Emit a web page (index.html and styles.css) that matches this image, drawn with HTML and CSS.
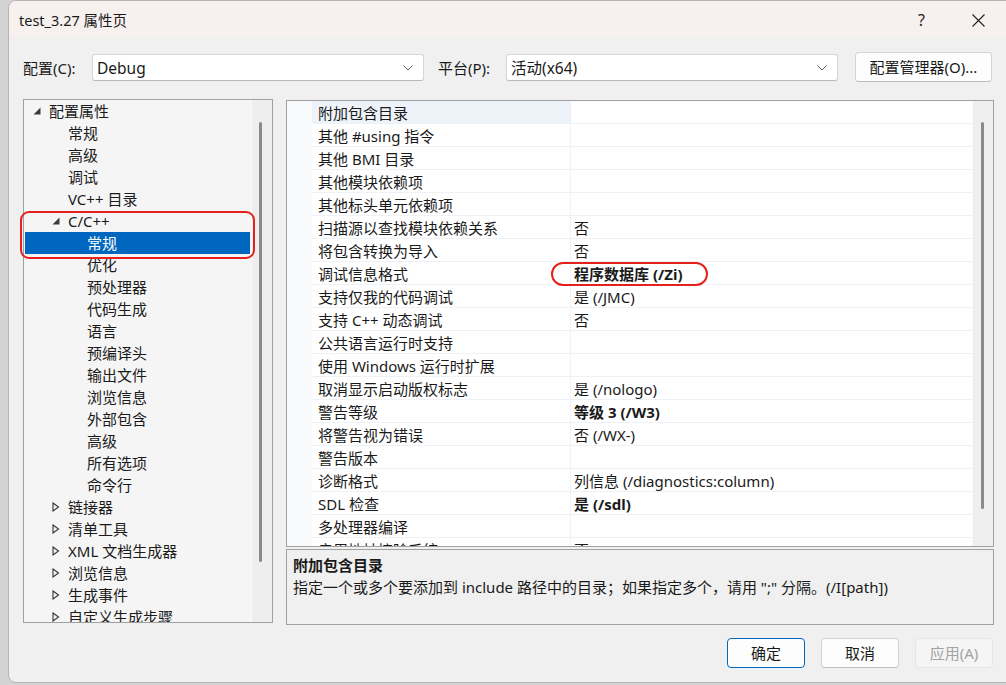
FILE: index.html
```html
<!DOCTYPE html>
<html lang="zh-CN">
<head>
<meta charset="utf-8">
<title>test_3.27 属性页</title>
<link rel="stylesheet" href="styles.css">
</head>
<body>
<div class="window">
  <div class="titlebar">
    <span class="title">test_3.27 属性页</span>
    <span class="help">?</span>
    <span class="close"><svg width="13" height="13" viewBox="0 0 13 13"><path d="M0.5 0.5 L12.5 12.5 M12.5 0.5 L0.5 12.5" stroke="#222" stroke-width="1.1" fill="none"/></svg></span>
  </div>
  <div class="content">
    <div class="config-row">
      <span class="lbl lbl1">配置(C):</span>
      <div class="combo"><span>Debug</span><svg class="chev" width="10" height="6" viewBox="0 0 10 6"><path d="M0.5 0.5 L5 5 L9.5 0.5" stroke="#606060" stroke-width="1" fill="none"/></svg></div>
      <span class="lbl lbl2">平台(P):</span>
      <div class="combo"><span>活动(x64)</span><svg class="chev" width="10" height="6" viewBox="0 0 10 6"><path d="M0.5 0.5 L5 5 L9.5 0.5" stroke="#606060" stroke-width="1" fill="none"/></svg></div>
      <button class="btn cfg-btn">配置管理器(O)...</button>
    </div>
    <div class="main">
      <div class="tree">
        <div class="tree-list">
          <div class="node l0"><span class="twisty"><svg width="8" height="8" viewBox="0 0 8 8"><polygon points="7.5,0.5 7.5,7.5 0.5,7.5" fill="#3c3c3c"/></svg></span>配置属性</div>
          <div class="node l1"><span class="twisty"></span>常规</div>
          <div class="node l1"><span class="twisty"></span>高级</div>
          <div class="node l1"><span class="twisty"></span>调试</div>
          <div class="node l1"><span class="twisty"></span>VC++ 目录</div>
          <div class="node l1"><span class="twisty"><svg width="8" height="8" viewBox="0 0 8 8"><polygon points="7.5,0.5 7.5,7.5 0.5,7.5" fill="#3c3c3c"/></svg></span>C/C++</div>
          <div class="node l2 selected"><span class="twisty"></span>常规</div>
          <div class="node l2"><span class="twisty"></span>优化</div>
          <div class="node l2"><span class="twisty"></span>预处理器</div>
          <div class="node l2"><span class="twisty"></span>代码生成</div>
          <div class="node l2"><span class="twisty"></span>语言</div>
          <div class="node l2"><span class="twisty"></span>预编译头</div>
          <div class="node l2"><span class="twisty"></span>输出文件</div>
          <div class="node l2"><span class="twisty"></span>浏览信息</div>
          <div class="node l2"><span class="twisty"></span>外部包含</div>
          <div class="node l2"><span class="twisty"></span>高级</div>
          <div class="node l2"><span class="twisty"></span>所有选项</div>
          <div class="node l2"><span class="twisty"></span>命令行</div>
          <div class="node l1"><span class="twisty"><svg width="8" height="10" viewBox="0 0 8 10"><polygon points="1,1 6.5,5 1,9" fill="none" stroke="#333" stroke-width="1.1"/></svg></span>链接器</div>
          <div class="node l1"><span class="twisty"><svg width="8" height="10" viewBox="0 0 8 10"><polygon points="1,1 6.5,5 1,9" fill="none" stroke="#333" stroke-width="1.1"/></svg></span>清单工具</div>
          <div class="node l1"><span class="twisty"><svg width="8" height="10" viewBox="0 0 8 10"><polygon points="1,1 6.5,5 1,9" fill="none" stroke="#333" stroke-width="1.1"/></svg></span>XML 文档生成器</div>
          <div class="node l1"><span class="twisty"><svg width="8" height="10" viewBox="0 0 8 10"><polygon points="1,1 6.5,5 1,9" fill="none" stroke="#333" stroke-width="1.1"/></svg></span>浏览信息</div>
          <div class="node l1"><span class="twisty"><svg width="8" height="10" viewBox="0 0 8 10"><polygon points="1,1 6.5,5 1,9" fill="none" stroke="#333" stroke-width="1.1"/></svg></span>生成事件</div>
          <div class="node l1"><span class="twisty"><svg width="8" height="10" viewBox="0 0 8 10"><polygon points="1,1 6.5,5 1,9" fill="none" stroke="#333" stroke-width="1.1"/></svg></span>自定义生成步骤</div>
        </div>
        <div class="vscroll tree-scroll"><div class="thumb tree-thumb"></div></div>
      </div>
      <div class="right">
        <div class="grid">
          <div class="grid-rows">
            <div class="row first"><span class="gut"></span><span class="name">附加包含目录</span><span class="val"></span></div>
            <div class="row"><span class="gut"></span><span class="name">其他 #using 指令</span><span class="val"></span></div>
            <div class="row"><span class="gut"></span><span class="name">其他 BMI 目录</span><span class="val"></span></div>
            <div class="row"><span class="gut"></span><span class="name">其他模块依赖项</span><span class="val"></span></div>
            <div class="row"><span class="gut"></span><span class="name">其他标头单元依赖项</span><span class="val"></span></div>
            <div class="row"><span class="gut"></span><span class="name">扫描源以查找模块依赖关系</span><span class="val">否</span></div>
            <div class="row"><span class="gut"></span><span class="name">将包含转换为导入</span><span class="val">否</span></div>
            <div class="row"><span class="gut"></span><span class="name">调试信息格式</span><span class="val bold">程序数据库 (/Zi)</span></div>
            <div class="row"><span class="gut"></span><span class="name">支持仅我的代码调试</span><span class="val">是 (/JMC)</span></div>
            <div class="row"><span class="gut"></span><span class="name">支持 C++ 动态调试</span><span class="val">否</span></div>
            <div class="row"><span class="gut"></span><span class="name">公共语言运行时支持</span><span class="val"></span></div>
            <div class="row"><span class="gut"></span><span class="name">使用 Windows 运行时扩展</span><span class="val"></span></div>
            <div class="row"><span class="gut"></span><span class="name">取消显示启动版权标志</span><span class="val">是 (/nologo)</span></div>
            <div class="row"><span class="gut"></span><span class="name">警告等级</span><span class="val bold">等级 3 (/W3)</span></div>
            <div class="row"><span class="gut"></span><span class="name">将警告视为错误</span><span class="val">否 (/WX-)</span></div>
            <div class="row"><span class="gut"></span><span class="name">警告版本</span><span class="val"></span></div>
            <div class="row"><span class="gut"></span><span class="name">诊断格式</span><span class="val">列信息 (/diagnostics:column)</span></div>
            <div class="row"><span class="gut"></span><span class="name">SDL 检查</span><span class="val bold">是 (/sdl)</span></div>
            <div class="row"><span class="gut"></span><span class="name">多处理器编译</span><span class="val"></span></div>
            <div class="row"><span class="gut"></span><span class="name">启用地址擦除系统</span><span class="val">否</span></div>
          </div>
          <div class="vscroll grid-scroll"><div class="thumb grid-thumb"></div></div>
        </div>
        <div class="desc">
          <div class="desc-title">附加包含目录</div>
          <div class="desc-text">指定一个或多个要添加到 include 路径中的目录；如果指定多个，请用 ";" 分隔。(/I[path])</div>
        </div>
      </div>
    </div>
    <div class="buttons">
      <button class="btn dlg-btn default">确定</button>
      <button class="btn dlg-btn">取消</button>
      <button class="btn dlg-btn disabled">应用(A)</button>
    </div>
  </div>
</div>
<div class="annot annot-tree"></div>
<div class="annot annot-val"></div>
</body>
</html>
```
FILE: styles.css
```css
* { box-sizing: border-box; }
html, body { margin: 0; padding: 0; }
body {
  width: 1006px;
  height: 685px;
  overflow: hidden;
  background: #d3d3d3;
  font-family: "Noto Sans", "Noto Sans CJK SC", sans-serif;
  font-size: 15px;
  color: #1a1a1a;
}
.window {
  margin-left: 8px;
  width: 1012px;
  height: 683px;
  background: #f0f0f0;
  border: 1px solid #b4b4b4;
  border-radius: 8px;
  overflow: hidden;
}
.titlebar {
  height: 37px;
  background: #f6f1ee;
  display: flex;
  align-items: center;
  padding-left: 10px;
}
.title { font-size: 14.5px; flex: 1; }
.help { font-size: 16px; width: 56px; color: #222; padding-left: 2px; }
.close { width: 47px; display: flex; align-items: center; margin-top: 1px; }
.content { width: 985px; padding-left: 14px; }
.config-row {
  margin-top: 14px;
  height: 30px;
  display: flex;
  align-items: center;
}
.lbl { display: inline-block; }
.lbl1 { width: 69px; }
.lbl2 { margin-left: 14px; width: 68px; }
.combo {
  width: 332px;
  height: 27px;
  background: #fff;
  border: 1px solid #d5d5d5;
  border-bottom-color: #b8b8b8;
  border-radius: 3px;
  display: flex;
  align-items: center;
  justify-content: space-between;
  padding: 1px 10px 0 4px;
  font-size: 15.5px;
}
.chev { margin-top: 1px; }
.btn {
  font-family: "Noto Sans", "Noto Sans CJK SC", sans-serif;
  font-size: 15px;
  color: #1a1a1a;
  background: #fdfdfd;
  border: 1px solid #d3d3d3;
  border-bottom-color: #bdbdbd;
  border-radius: 4px;
  padding: 0;
  line-height: 20px;
}
.cfg-btn { margin-left: 17px; width: 137px; height: 30px; }
.main {
  margin-top: 17px;
  display: flex;
  align-items: flex-start;
  height: 526px;
}
.tree {
  width: 250px;
  height: 524px;
  border: 1px solid #a0a0a0;
  background: #f5f5f5;
  display: flex;
  overflow: hidden;
}
.tree-list { flex: 1; overflow: hidden; }
.node {
  height: 22px;
  line-height: 22px;
  display: flex;
  align-items: center;
  white-space: nowrap;
  margin: 0 1px;
}
.l0 { padding-left: 8px; }
.l1 { padding-left: 27px; }
.l2 { padding-left: 46px; }
.twisty { width: 16px; height: 22px; display: flex; align-items: center; flex: none; }
.node.selected { background: #0067c0; color: #fff; }
.vscroll {
  width: 21px;
  flex: none;
  background: #eeeeee;
  border-left: 1px solid #fafafa;
}
.thumb { width: 3px; background: #8a8a8a; border-radius: 2px; }
.tree-thumb { margin-top: 22px; margin-left: 7px; height: 440px; }
.right {
  margin-left: 13px;
  margin-top: 1px;
  width: 708px;
  display: flex;
  flex-direction: column;
}
.grid {
  height: 447px;
  border: 1px solid #a0a0a0;
  background: #fff;
  display: flex;
  overflow: hidden;
}
.grid-rows { flex: 1; overflow: hidden; background: #f8f9fb; }
.row {
  display: grid;
  grid-template-columns: 25px 259px 1fr;
  grid-template-rows: 23px;
  height: 23px;
  line-height: 24px;
  white-space: nowrap;
  overflow: hidden;
}
.gut { background: #f8f9fb; }
.name {
  background: #fff;
  padding-left: 6px;
  border-right: 1px solid #eef2f7;
  border-bottom: 1px solid #eef2f7;
}
.val {
  background: #fff;
  padding-left: 3px;
  border-bottom: 1px solid #eef2f7;
}
.row.first .name { background: #eef3f9; }
.bold { font-weight: 700; }
.grid-scroll { background: #efefef; border-left: 1px solid #f8f8f8; }
.grid-thumb { margin-top: 21px; margin-left: 8px; height: 387px; }
.desc {
  margin-top: 2px;
  height: 76px;
  border: 1px solid #a0a0a0;
  background: #f0f0f0;
  padding: 4px 6px 0;
  line-height: 22px;
}
.desc-title { font-weight: 700; }
.buttons {
  margin-top: 13px;
  display: flex;
  justify-content: flex-end;
  gap: 16px;
  padding-right: 1px;
}
.dlg-btn { width: 78px; height: 30px; }
.dlg-btn.default { border: 1px solid #0067c0; }
.dlg-btn.disabled { background: #f5f5f5; border-color: #e6e6e6; color: #a3a3a3; }
.annot {
  position: absolute;
  border: 2px solid #e5201d;
}
.annot-tree { left: 20px; top: 211px; width: 235px; height: 48px; border-radius: 9px; }
.annot-val { left: 551px; top: 262px; width: 157px; height: 24px; border-radius: 12px; }
```
